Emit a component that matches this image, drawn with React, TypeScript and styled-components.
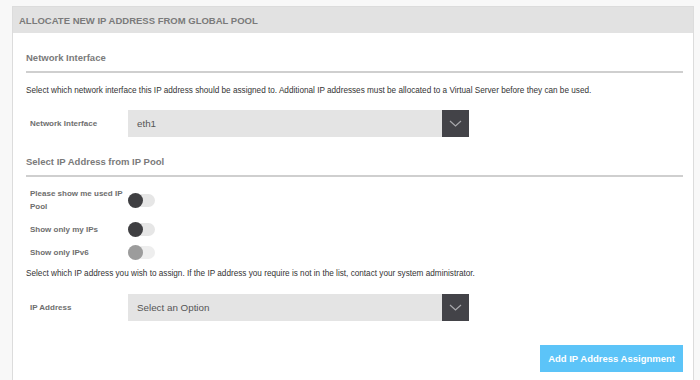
import React from "react";
import styled, { createGlobalStyle } from "styled-components";

const Global = createGlobalStyle`
  html, body { margin: 0; padding: 0; background: #f8f8f8; }
  body { font-family: "Liberation Sans", Arial, sans-serif; }
  * { box-sizing: border-box; }
`;

const Page = styled.div`
  padding: 6px 6px 0 12px;
  height: 380px;
  overflow: hidden;
`;

const Panel = styled.section`
  background: #fff;
  border: 1px solid #dcdcdc;
  min-height: 400px;
`;

const PanelHeader = styled.header`
  background: #e2e2e2;
  height: 26px;
  display: flex;
  align-items: center;
  padding-left: 6px;
  font-size: 9.5px;
  font-weight: bold;
  color: #7a7a7a;
`;

const PanelBody = styled.div`
  padding: 0 10px 0 13px;
  display: flex;
  flex-direction: column;
`;

const SectionTitle = styled.h3<{ $top: number }>`
  margin: ${(p) => p.$top}px 0 0;
  padding-bottom: 7px;
  border-bottom: 2px solid #cfcfcf;
  font-size: 9.5px;
  line-height: 12px;
  font-weight: bold;
  color: #7a7a7a;
`;

const Description = styled.p<{ $top: number }>`
  margin: ${(p) => p.$top}px 0 0;
  font-size: 8.2px;
  line-height: 12px;
  color: #333;
`;

const FormRow = styled.div<{ $top: number }>`
  margin-top: ${(p) => p.$top}px;
  display: flex;
  align-items: center;
`;

const FieldLabel = styled.label`
  width: 102px;
  padding-left: 4px;
  font-size: 8px;
  font-weight: bold;
  color: #6e6e6e;
`;

const SelectBox = styled.div`
  display: flex;
  height: 27px;
`;

const SelectValue = styled.div`
  width: 314px;
  background: #e4e4e4;
  display: flex;
  align-items: center;
  padding-left: 9px;
  font-size: 9.8px;
  color: #555;
`;

const SelectButton = styled.div`
  width: 27px;
  background: #434348;
  display: flex;
  align-items: center;
  justify-content: center;
`;

const ToggleList = styled.div`
  margin-top: 10px;
  display: flex;
  flex-direction: column;
  gap: 10px;
`;

const ToggleRow = styled.div`
  display: flex;
  align-items: center;
`;

const ToggleLabel = styled.span`
  width: 102px;
  padding: 0 1px 0 4px;
  font-size: 8px;
  line-height: 13px;
  font-weight: bold;
  color: #6e6e6e;
`;

const Track = styled.span<{ $disabled?: boolean }>`
  position: relative;
  width: 27px;
  height: 13px;
  border-radius: 7px;
  background: ${(p) => (p.$disabled ? "#eeeeee" : "#e6e6e6")};
`;

const Knob = styled.span<{ $disabled?: boolean }>`
  position: absolute;
  left: 0;
  top: -1px;
  width: 15px;
  height: 15px;
  border-radius: 50%;
  background: ${(p) => (p.$disabled ? "#9c9c9c" : "#3f3f42")};
`;

const Actions = styled.div`
  margin-top: 24px;
  display: flex;
  justify-content: flex-end;
`;

const PrimaryButton = styled.button`
  height: 27px;
  padding: 0 8px;
  border: none;
  background: #5cc4f8;
  color: #fff;
  font-family: "Liberation Sans", Arial, sans-serif;
  font-size: 9.5px;
  font-weight: bold;
`;

const Chevron = () => (
  <svg width="13" height="7" viewBox="0 0 13 7">
    <path d="M1 1 L6.5 6 L12 1" fill="none" stroke="#a8a8ac" strokeWidth="1.2" />
  </svg>
);

const Select = ({ value }: { value: string }) => (
  <SelectBox>
    <SelectValue>{value}</SelectValue>
    <SelectButton>
      <Chevron />
    </SelectButton>
  </SelectBox>
);

const Toggle = ({ label, disabled }: { label: string; disabled?: boolean }) => (
  <ToggleRow>
    <ToggleLabel>{label}</ToggleLabel>
    <Track $disabled={disabled}>
      <Knob $disabled={disabled} />
    </Track>
  </ToggleRow>
);

export default function App() {
  return (
    <Page>
      <Global />
      <Panel>
        <PanelHeader>ALLOCATE NEW IP ADDRESS FROM GLOBAL POOL</PanelHeader>
        <PanelBody>
          <SectionTitle $top={19}>Network Interface</SectionTitle>
          <Description $top={12}>
            Select which network interface this IP address should be assigned to. Additional IP addresses must be
            allocated to a Virtual Server before they can be used.
          </Description>
          <FormRow $top={13}>
            <FieldLabel>Network Interface</FieldLabel>
            <Select value="eth1" />
          </FormRow>
          <SectionTitle $top={19}>Select IP Address from IP Pool</SectionTitle>
          <ToggleList>
            <Toggle label="Please show me used IP Pool" />
            <Toggle label="Show only my IPs" />
            <Toggle label="Show only IPv6" disabled />
          </ToggleList>
          <Description $top={9}>
            Select which IP address you wish to assign. If the IP address you require is not in the list, contact
            your system administrator.
          </Description>
          <FormRow $top={14}>
            <FieldLabel>IP Address</FieldLabel>
            <Select value="Select an Option" />
          </FormRow>
          <Actions>
            <PrimaryButton>Add IP Address Assignment</PrimaryButton>
          </Actions>
        </PanelBody>
      </Panel>
    </Page>
  );
}
